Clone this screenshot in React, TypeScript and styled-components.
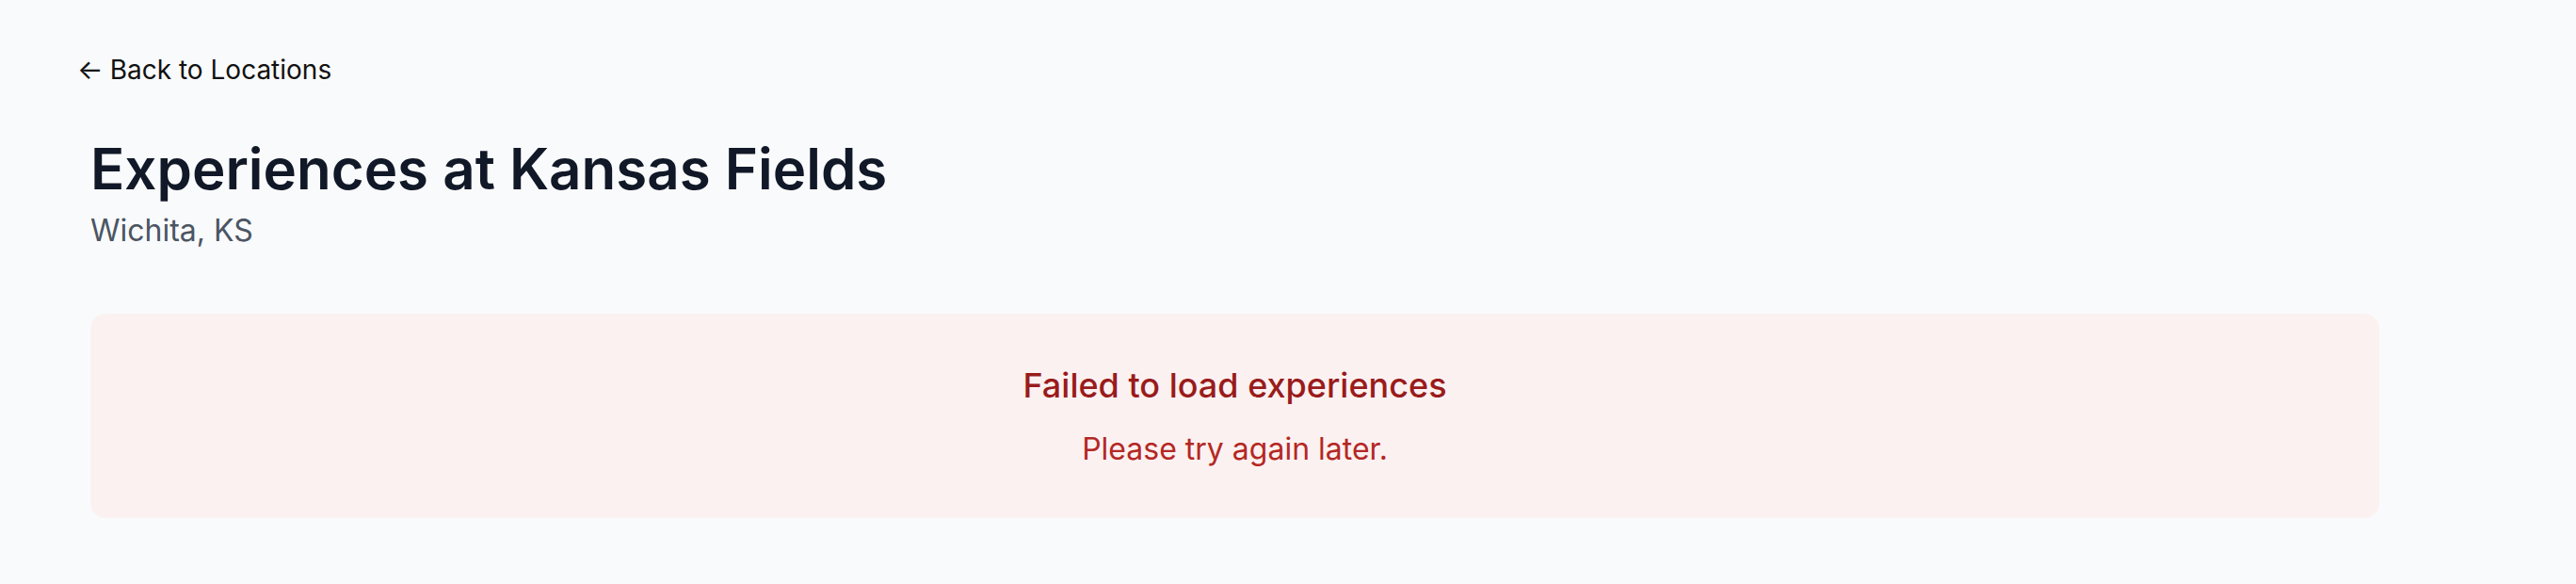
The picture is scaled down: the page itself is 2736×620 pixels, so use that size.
import React from "react";
import styled, { createGlobalStyle } from "styled-components";

const Global = createGlobalStyle`
  html, body {
    margin: 0;
    padding: 0;
    background: #f9fafb;
    font-family: Inter, "Noto Sans", sans-serif;
  }
`;

const Page = styled.main`
  min-height: 620px;
  box-sizing: border-box;
  padding: 56px 209px 40px 82px;
  background: #f9fafb;
`;

const BackLink = styled.a`
  display: inline-flex;
  align-items: center;
  gap: 7px;
  font-size: 28px;
  line-height: 36px;
  color: #111111;
  text-decoration: none;
  cursor: pointer;
`;

const Arrow = styled.span`
  font-size: 29px;
  line-height: 36px;
  font-weight: 400;
`;

const Content = styled.section`
  display: flex;
  flex-direction: column;
  padding-left: 14px;
  margin-top: 53px;
`;

const Title = styled.h1`
  margin: 0;
  font-size: 60px;
  line-height: 68px;
  font-weight: 600;
  color: #111827;
`;

const Subtitle = styled.p`
  margin: 12px 0 0;
  font-size: 32px;
  line-height: 40px;
  color: #4b5563;
`;

const ErrorBox = styled.div`
  margin-top: 68px;
  background: #fcf1f1;
  border-radius: 16px;
  padding: 54px 24px 53px;
  display: flex;
  flex-direction: column;
  align-items: center;
  gap: 26px;
  text-align: center;
`;

const ErrorTitle = styled.h2`
  margin: 0;
  font-size: 36px;
  line-height: 44px;
  font-weight: 500;
  color: #991b1b;
`;

const ErrorText = styled.p`
  margin: 0;
  font-size: 32px;
  line-height: 40px;
  color: #b42824;
`;

export default function App() {
  return (
    <>
      <Global />
      <Page>
        <BackLink href="#">
          <Arrow>←</Arrow>
          Back to Locations
        </BackLink>
        <Content>
          <Title>Experiences at Kansas Fields</Title>
          <Subtitle>Wichita, KS</Subtitle>
          <ErrorBox>
            <ErrorTitle>Failed to load experiences</ErrorTitle>
            <ErrorText>Please try again later.</ErrorText>
          </ErrorBox>
        </Content>
      </Page>
    </>
  );
}
